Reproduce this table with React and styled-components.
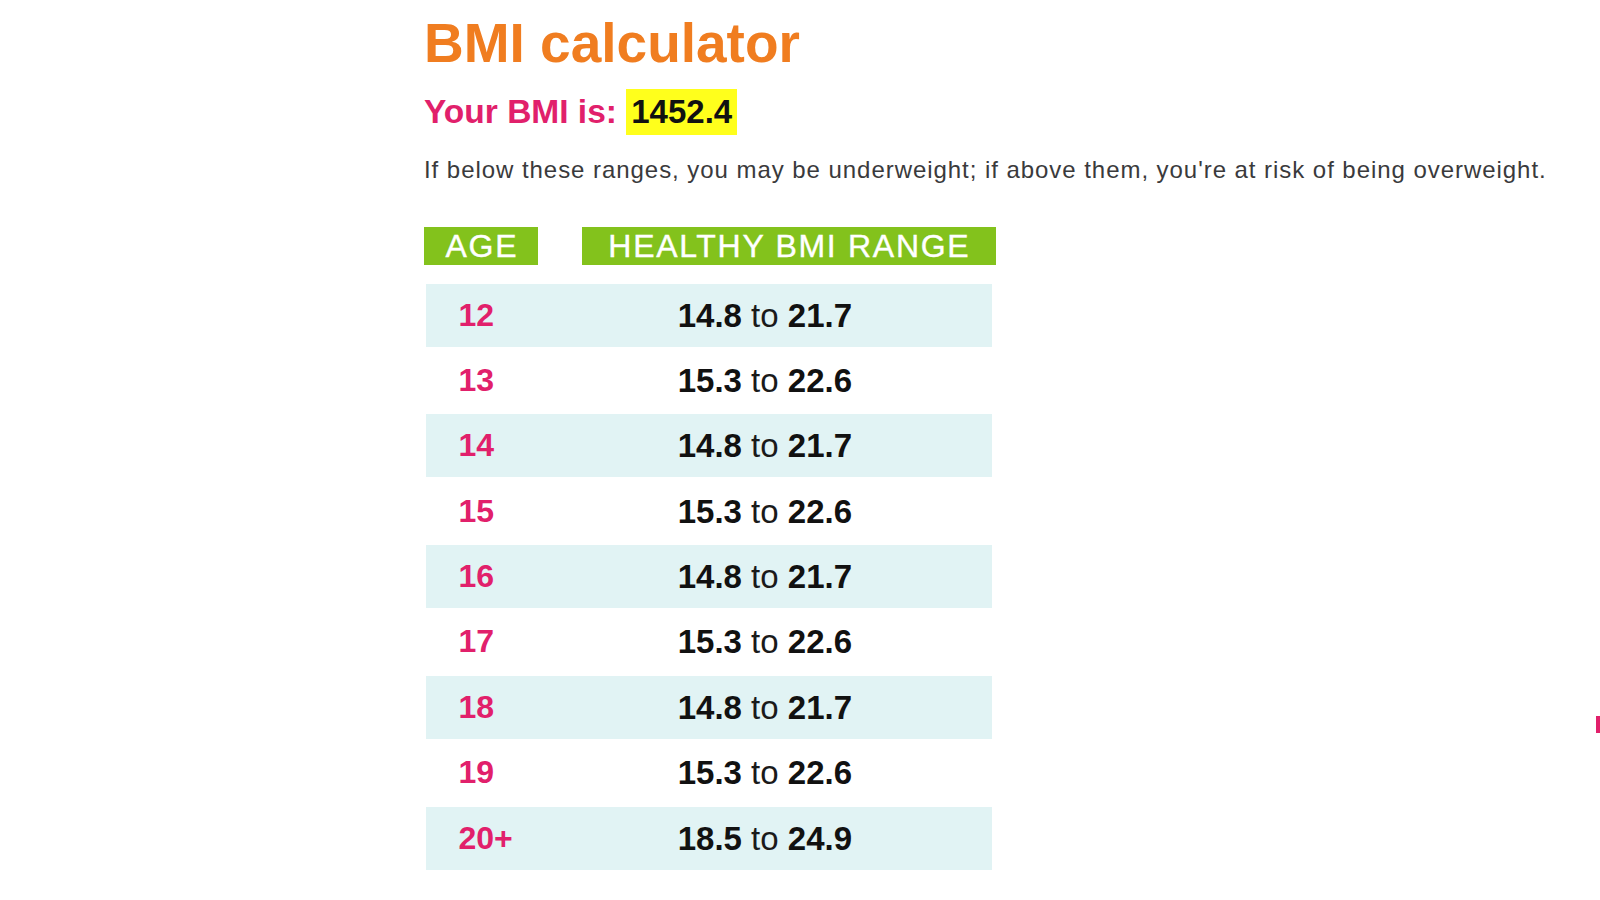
import styled, { createGlobalStyle } from 'styled-components';

const GlobalStyle = createGlobalStyle`
	html,
	body {
		margin: 0;
		padding: 0;
		background: #fff;
		font-family: 'Liberation Sans', Arial, sans-serif;
	}
`;

const Page = styled.div`
	position: relative;
	width: 1600px;
	height: 900px;
	overflow: hidden;
	padding: 16px 0 0 424px;
	box-sizing: border-box;
`;

const Title = styled.h1`
	margin: 0;
	font-size: 55px;
	line-height: 54px;
	font-weight: 700;
	color: #f07d20;
`;

const ResultLine = styled.div`
	margin-top: 19px;
	height: 46px;
	line-height: 46px;
	font-size: 33.5px;
	font-weight: 700;
	color: #e1206b;
	white-space: nowrap;
`;

const BmiValue = styled.span`
	display: inline-block;
	padding: 0 5px;
	font-size: 33px;
	background: #ffff1c;
	color: #111;
`;

const Note = styled.p`
	margin: 23px 0 0 0;
	font-size: 24px;
	line-height: 24px;
	letter-spacing: 0.95px;
	color: #3a3a3c;
	white-space: nowrap;
`;

const Table = styled.div`
	margin: 45px 0 0 0;
	width: 572px;
`;

const HeadRow = styled.div`
	display: grid;
	grid-template-columns: 114px 414px;
	column-gap: 43.5px;
	height: 38px;
`;

const HeadCell = styled.div`
	display: flex;
	align-items: center;
	justify-content: center;
	background: #83c21c;
	color: #fff;
	font-size: 32px;
	letter-spacing: 1.7px;
	padding-left: 1.7px;
	-webkit-text-stroke: 0.4px #fff;
`;

const Body = styled.div`
	display: grid;
	grid-auto-rows: 63px;
	row-gap: 2.4px;
	margin: 18.5px 0 0 2.4px;
	width: 566px;
`;

const Row = styled.div`
	display: grid;
	grid-template-columns: 111px 1fr;
	align-items: center;
	background: ${(props) => (props.shaded ? '#e1f3f4' : '#fff')};
	font-size: 33px;
	line-height: 33px;
`;

const Age = styled.div`
	padding-left: 32px;
	font-weight: 700;
	font-size: 32px;
	color: #e1206b;
`;

const Range = styled.div`
	text-align: center;
	color: #1a1a1a;

	b {
		font-weight: 700;
		color: #111;
	}
`;

const EdgeMark = styled.div`
	position: absolute;
	left: 1596px;
	top: 716px;
	width: 4px;
	height: 17px;
	background: #e1206b;
`;

const rows = [
	['12', '14.8', '21.7'],
	['13', '15.3', '22.6'],
	['14', '14.8', '21.7'],
	['15', '15.3', '22.6'],
	['16', '14.8', '21.7'],
	['17', '15.3', '22.6'],
	['18', '14.8', '21.7'],
	['19', '15.3', '22.6'],
	['20+', '18.5', '24.9'],
];

function App() {
	return (
		<>
			<GlobalStyle />
			<Page>
				<Title>BMI calculator</Title>
				<ResultLine>
					Your BMI is: <BmiValue>1452.4</BmiValue>
				</ResultLine>
				<Note>
					If below these ranges, you may be underweight; if above them, you're at risk of being
					overweight.
				</Note>

				<Table>
					<HeadRow>
						<HeadCell>AGE</HeadCell>
						<HeadCell>HEALTHY BMI RANGE</HeadCell>
					</HeadRow>
					<Body>
						{rows.map(([age, low, high], i) => (
							<Row key={age} shaded={i % 2 === 0}>
								<Age>{age}</Age>
								<Range>
									<b>{low}</b> to <b>{high}</b>
								</Range>
							</Row>
						))}
					</Body>
				</Table>

				<EdgeMark />
			</Page>
		</>
	);
}

export default App;
